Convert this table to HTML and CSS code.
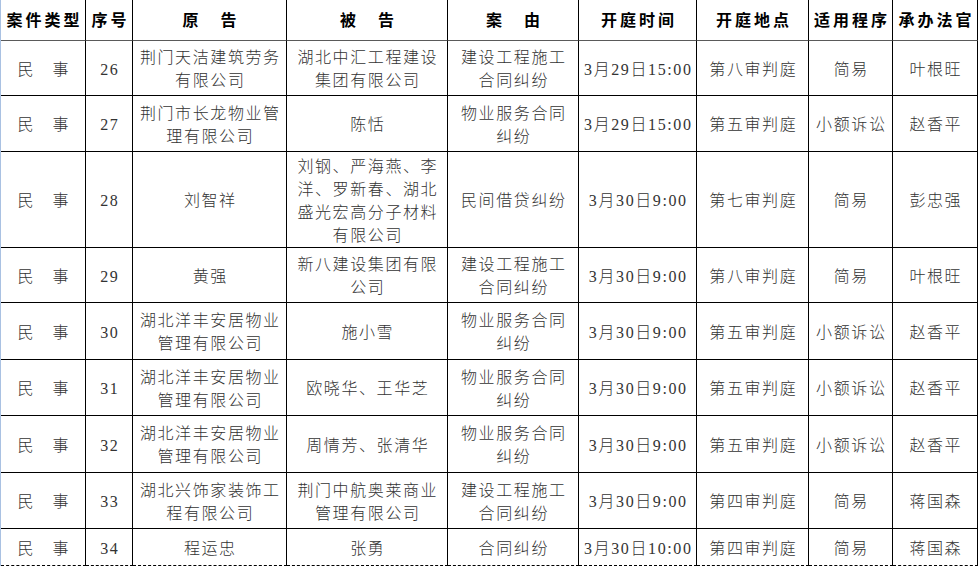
FILE: index.html
```html
<!DOCTYPE html>
<html lang="zh-CN">
<head>
<meta charset="utf-8">
<title>开庭公告</title>
<link rel="stylesheet" href="styles.css">
</head>
<body>
<div class="sheet">
  <div class="cell head">案件类型</div>
  <div class="cell head">序号</div>
  <div class="cell head">原　告</div>
  <div class="cell head">被　告</div>
  <div class="cell head">案　由</div>
  <div class="cell head">开庭时间</div>
  <div class="cell head">开庭地点</div>
  <div class="cell head">适用程序</div>
  <div class="cell head">承办法官</div>

  <div class="cell">民　事</div>
  <div class="cell">26</div>
  <div class="cell">荆门天洁建筑劳务<br>有限公司</div>
  <div class="cell">湖北中汇工程建设<br>集团有限公司</div>
  <div class="cell">建设工程施工<br>合同纠纷</div>
  <div class="cell">3月29日15:00</div>
  <div class="cell">第八审判庭</div>
  <div class="cell">简易</div>
  <div class="cell">叶根旺</div>

  <div class="cell">民　事</div>
  <div class="cell">27</div>
  <div class="cell">荆门市长龙物业管<br>理有限公司</div>
  <div class="cell">陈恬</div>
  <div class="cell">物业服务合同<br>纠纷</div>
  <div class="cell">3月29日15:00</div>
  <div class="cell">第五审判庭</div>
  <div class="cell">小额诉讼</div>
  <div class="cell">赵香平</div>

  <div class="cell">民　事</div>
  <div class="cell">28</div>
  <div class="cell">刘智祥</div>
  <div class="cell">刘钢、严海燕、李<br>洋、罗新春、湖北<br>盛光宏高分子材料<br>有限公司</div>
  <div class="cell">民间借贷纠纷</div>
  <div class="cell">3月30日9:00</div>
  <div class="cell">第七审判庭</div>
  <div class="cell">简易</div>
  <div class="cell">彭忠强</div>

  <div class="cell">民　事</div>
  <div class="cell">29</div>
  <div class="cell">黄强</div>
  <div class="cell">新八建设集团有限<br>公司</div>
  <div class="cell">建设工程施工<br>合同纠纷</div>
  <div class="cell">3月30日9:00</div>
  <div class="cell">第八审判庭</div>
  <div class="cell">简易</div>
  <div class="cell">叶根旺</div>

  <div class="cell">民　事</div>
  <div class="cell">30</div>
  <div class="cell">湖北洋丰安居物业<br>管理有限公司</div>
  <div class="cell">施小雪</div>
  <div class="cell">物业服务合同<br>纠纷</div>
  <div class="cell">3月30日9:00</div>
  <div class="cell">第五审判庭</div>
  <div class="cell">小额诉讼</div>
  <div class="cell">赵香平</div>

  <div class="cell">民　事</div>
  <div class="cell">31</div>
  <div class="cell">湖北洋丰安居物业<br>管理有限公司</div>
  <div class="cell">欧晓华、王华芝</div>
  <div class="cell">物业服务合同<br>纠纷</div>
  <div class="cell">3月30日9:00</div>
  <div class="cell">第五审判庭</div>
  <div class="cell">小额诉讼</div>
  <div class="cell">赵香平</div>

  <div class="cell">民　事</div>
  <div class="cell">32</div>
  <div class="cell">湖北洋丰安居物业<br>管理有限公司</div>
  <div class="cell">周情芳、张清华</div>
  <div class="cell">物业服务合同<br>纠纷</div>
  <div class="cell">3月30日9:00</div>
  <div class="cell">第五审判庭</div>
  <div class="cell">小额诉讼</div>
  <div class="cell">赵香平</div>

  <div class="cell">民　事</div>
  <div class="cell">33</div>
  <div class="cell">湖北兴饰家装饰工<br>程有限公司</div>
  <div class="cell">荆门中航奥莱商业<br>管理有限公司</div>
  <div class="cell">建设工程施工<br>合同纠纷</div>
  <div class="cell">3月30日9:00</div>
  <div class="cell">第四审判庭</div>
  <div class="cell">简易</div>
  <div class="cell">蒋国森</div>

  <div class="cell last">民　事</div>
  <div class="cell last">34</div>
  <div class="cell last">程运忠</div>
  <div class="cell last">张勇</div>
  <div class="cell last">合同纠纷</div>
  <div class="cell last">3月30日10:00</div>
  <div class="cell last">第四审判庭</div>
  <div class="cell last">简易</div>
  <div class="cell last">蒋国森</div>
</div>
</body>
</html>
```
FILE: styles.css
```css
html, body {
  margin: 0;
  padding: 0;
  background: #ffffff;
}

.sheet {
  display: grid;
  width: 978px;
  box-sizing: border-box;
  border-left: 1px solid #a9c1e2;
  grid-template-columns: 85px 47px 154px 161px 131px 118px 112px 84px 85px;
  grid-template-rows: 41px 55px 56px 96px 55px 57px 56px 57px 56px 37px;
  font-family: "Liberation Serif", "Noto Sans CJK SC", serif;
  font-size: 16px;
  font-weight: 300;
  line-height: 23px;
  letter-spacing: 1.6px;
  color: #333333;
}

.cell {
  display: flex;
  align-items: center;
  justify-content: center;
  text-align: center;
  box-sizing: border-box;
  border-right: 1px solid #000;
  border-bottom: 1px solid #000;
  padding-left: 1.6px;
  padding-top: 2px;
  white-space: nowrap;
}

.head {
  font-weight: 700;
  color: #000;
  letter-spacing: 3px;
  padding-left: 3px;
  padding-top: 0;
  border-bottom-color: #5a5a5a;
}

.last {
  border-bottom: 1px dashed #000;
}
```
